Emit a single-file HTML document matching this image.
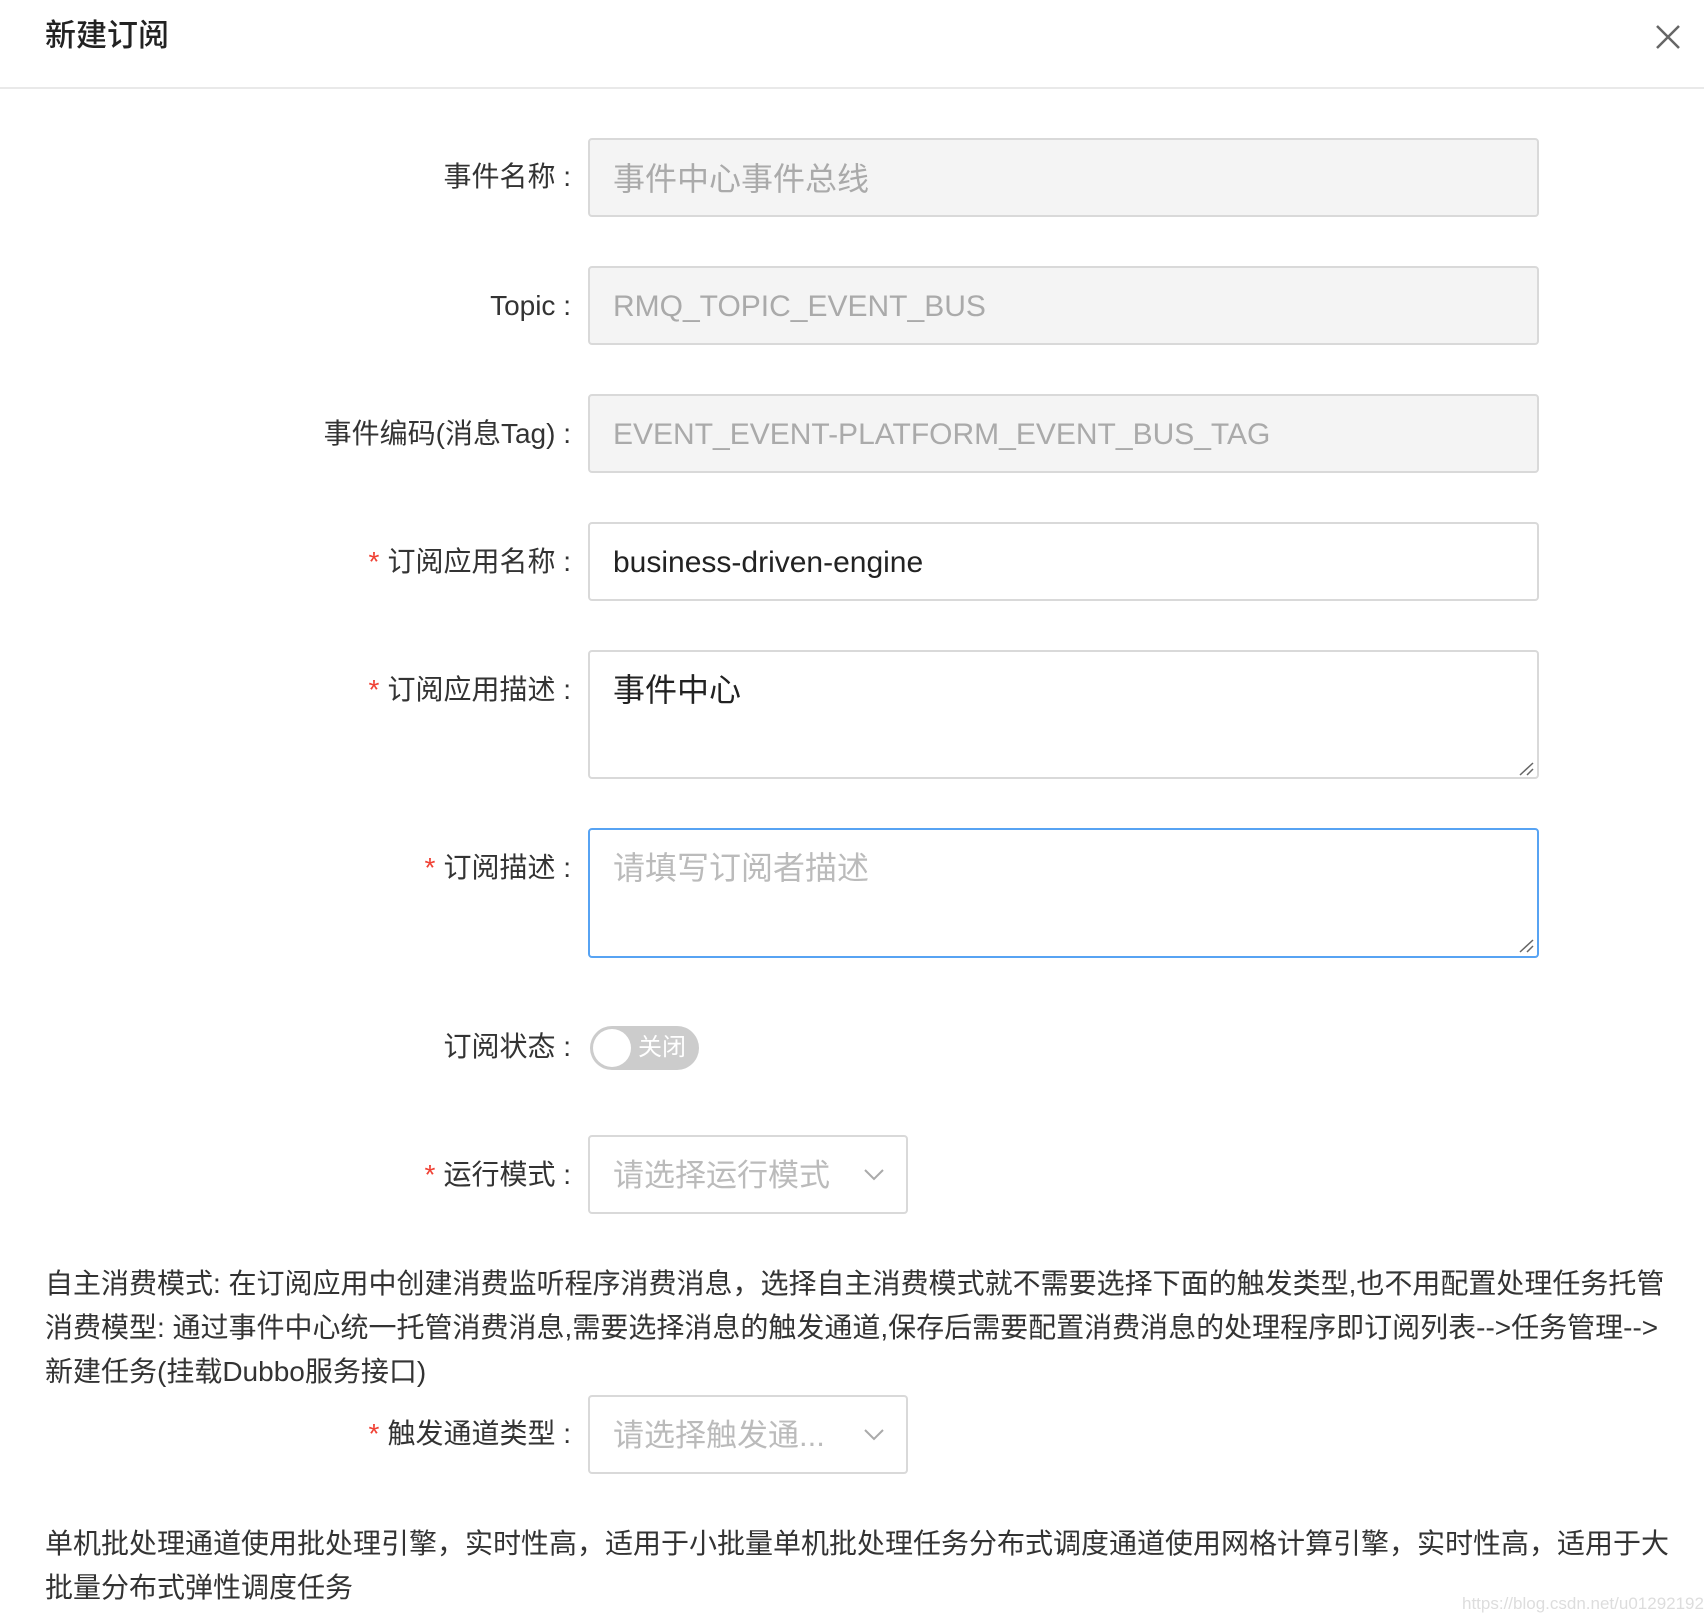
<!DOCTYPE html>
<html><head><meta charset="utf-8"><style>
*{box-sizing:border-box;margin:0;padding:0}
body{width:1704px;height:1624px;background:#fff;font-family:"Liberation Sans","Noto Sans CJK SC",sans-serif;color:#333;position:relative;overflow:hidden}
.abs{position:absolute}
.hdr{left:0;top:0;width:1704px;height:89px;border-bottom:2px solid #e9e9e9}
.title{left:45px;top:14px;font-size:31px;color:#222;line-height:44px;font-weight:500}
.lbl{right:1133px;font-size:28px;color:#333;line-height:40px;white-space:nowrap}
.lbl .s{color:#f04134;margin-right:8px}
.box{left:588px;width:951px;border:2px solid #d9d9d9;border-radius:4px;font-size:30px;padding:0 23px;line-height:78px;color:#333}
.cj{font-size:32px}
.dis{background:#f4f4f4;color:#aaa}
.ta{line-height:76px}
.ph{color:#bbb}
.sel{left:588px;width:320px;height:79px;border:2px solid #d9d9d9;border-radius:4px;font-size:31px;color:#bbb;padding-left:23px;line-height:77px}
.p{left:45px;font-size:28px;line-height:44px;color:#333;white-space:nowrap}
</style></head><body>
<div class="abs hdr"></div>
<div class="abs title">新建订阅</div>
<svg class="abs" style="left:1655px;top:24px" width="26" height="26" viewBox="0 0 26 26"><path d="M2 2L24 24M24 2L2 24" stroke="#666" stroke-width="2.5"/></svg>

<div class="abs lbl" style="top:157px">事件名称 :</div>
<div class="abs box dis cj" style="top:138px;height:79px">事件中心事件总线</div>
<div class="abs lbl" style="top:286px">Topic :</div>
<div class="abs box dis" style="top:266px;height:79px">RMQ_TOPIC_EVENT_BUS</div>
<div class="abs lbl" style="top:414px">事件编码(消息Tag) :</div>
<div class="abs box dis" style="top:394px;height:79px">EVENT_EVENT-PLATFORM_EVENT_BUS_TAG</div>
<div class="abs lbl" style="top:542px"><span class="s">*</span>订阅应用名称 :</div>
<div class="abs box" style="top:522px;height:79px;color:#222">business-driven-engine</div>
<div class="abs lbl" style="top:670px"><span class="s">*</span>订阅应用描述 :</div>
<div class="abs box ta cj" style="top:650px;height:129px;color:#222">事件中心</div>
<svg class="abs" style="left:1519px;top:762px" width="16" height="14"><path d="M1 13L14 1M8 13L14 7" stroke="#666" stroke-width="1.5"/></svg>
<div class="abs lbl" style="top:848px"><span class="s">*</span>订阅描述 :</div>
<div class="abs box ta ph cj" style="top:828px;height:130px;border-color:#57a3f3">请填写订阅者描述</div>
<svg class="abs" style="left:1519px;top:939px" width="16" height="14"><path d="M1 13L14 1M8 13L14 7" stroke="#666" stroke-width="1.5"/></svg>

<div class="abs lbl" style="top:1027px">订阅状态 :</div>
<div class="abs" style="left:590px;top:1026px;width:109px;height:44px;border-radius:22px;background:#ccc"></div>
<div class="abs" style="left:593px;top:1029px;width:38px;height:38px;border-radius:50%;background:#fff"></div>
<div class="abs" style="left:638px;top:1030px;font-size:24px;color:#fff;line-height:36px">关闭</div>

<div class="abs lbl" style="top:1155px"><span class="s">*</span>运行模式 :</div>
<div class="abs sel" style="top:1135px">请选择运行模式</div>
<svg class="abs" style="left:864px;top:1168px" width="20" height="14"><path d="M1 2L10 11L19 2" stroke="#aaa" stroke-width="2" fill="none"/></svg>

<div class="abs p" style="top:1262px">自主消费模式: 在订阅应用中创建消费监听程序消费消息，选择自主消费模式就不需要选择下面的触发类型,也不用配置处理任务托管</div>
<div class="abs p" style="top:1306px">消费模型: 通过事件中心统一托管消费消息,需要选择消息的触发通道,保存后需要配置消费消息的处理程序即订阅列表--&gt;任务管理--&gt;</div>
<div class="abs p" style="top:1350px">新建任务(挂载Dubbo服务接口)</div>

<div class="abs lbl" style="top:1414px"><span class="s">*</span>触发通道类型 :</div>
<div class="abs sel" style="top:1395px">请选择触发通...</div>
<svg class="abs" style="left:864px;top:1428px" width="20" height="14"><path d="M1 2L10 11L19 2" stroke="#aaa" stroke-width="2" fill="none"/></svg>

<div class="abs p" style="top:1522px">单机批处理通道使用批处理引擎，实时性高，适用于小批量单机批处理任务分布式调度通道使用网格计算引擎，实时性高，适用于大</div>
<div class="abs p" style="top:1566px">批量分布式弹性调度任务</div>
<div class="abs" style="left:1462px;top:1594px;font-size:17px;color:#ddd">https://blog.csdn.net/u012921921</div>
</body></html>
